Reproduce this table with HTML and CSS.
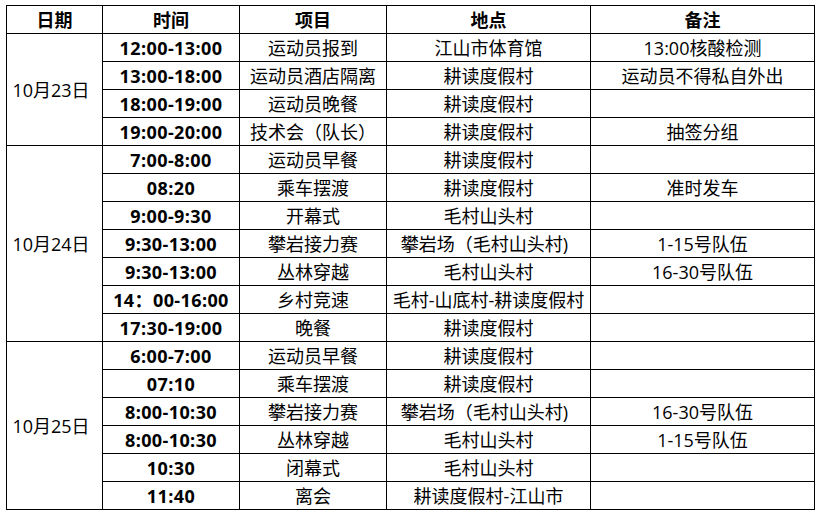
FILE: index.html
```html
<!DOCTYPE html>
<html lang="zh-CN">
<head>
<meta charset="utf-8">
<title>日程安排</title>
<link rel="stylesheet" href="styles.css">
</head>
<body>
<table class="schedule">
  <colgroup>
    <col class="c-date">
    <col class="c-time">
    <col class="c-item">
    <col class="c-place">
    <col class="c-note">
  </colgroup>
  <thead>
    <tr><th>日期</th><th>时间</th><th>项目</th><th>地点</th><th>备注</th></tr>
  </thead>
  <tbody>
    <tr><td class="date" rowspan="4">10月23日</td><td class="time">12:00-13:00</td><td>运动员报到</td><td>江山市体育馆</td><td>13:00核酸检测</td></tr>
    <tr><td class="time">13:00-18:00</td><td>运动员酒店隔离</td><td>耕读度假村</td><td>运动员不得私自外出</td></tr>
    <tr><td class="time">18:00-19:00</td><td>运动员晚餐</td><td>耕读度假村</td><td></td></tr>
    <tr><td class="time">19:00-20:00</td><td>技术会（队长）</td><td>耕读度假村</td><td>抽签分组</td></tr>

    <tr><td class="date" rowspan="7">10月24日</td><td class="time">7:00-8:00</td><td>运动员早餐</td><td>耕读度假村</td><td></td></tr>
    <tr><td class="time">08:20</td><td>乘车摆渡</td><td>耕读度假村</td><td>准时发车</td></tr>
    <tr><td class="time">9:00-9:30</td><td>开幕式</td><td>毛村山头村</td><td></td></tr>
    <tr><td class="time">9:30-13:00</td><td>攀岩接力赛</td><td class="shift">攀岩场（毛村山头村)</td><td>1-15号队伍</td></tr>
    <tr><td class="time">9:30-13:00</td><td>丛林穿越</td><td>毛村山头村</td><td>16-30号队伍</td></tr>
    <tr><td class="time">14：00-16:00</td><td>乡村竞速</td><td>毛村-山底村-耕读度假村</td><td></td></tr>
    <tr><td class="time">17:30-19:00</td><td>晚餐</td><td>耕读度假村</td><td></td></tr>

    <tr><td class="date" rowspan="6">10月25日</td><td class="time">6:00-7:00</td><td>运动员早餐</td><td>耕读度假村</td><td></td></tr>
    <tr><td class="time">07:10</td><td>乘车摆渡</td><td>耕读度假村</td><td></td></tr>
    <tr><td class="time">8:00-10:30</td><td>攀岩接力赛</td><td class="shift">攀岩场（毛村山头村)</td><td>16-30号队伍</td></tr>
    <tr><td class="time">8:00-10:30</td><td>丛林穿越</td><td>毛村山头村</td><td>1-15号队伍</td></tr>
    <tr><td class="time">10:30</td><td>闭幕式</td><td>毛村山头村</td><td></td></tr>
    <tr><td class="time">11:40</td><td>离会</td><td>耕读度假村-江山市</td><td></td></tr>
  </tbody>
</table>
</body>
</html>
```

FILE: styles.css
```css
html, body {
  margin: 0;
  padding: 0;
  background: #ffffff;
}

body {
  font-family: "Open Sans", "Noto Sans CJK SC", sans-serif;
  font-size: 18px;
  color: #000000;
}

.schedule {
  margin: 5px 0 0 6px;
  border-collapse: collapse;
  table-layout: fixed;
  width: 809px;
}

.c-date { width: 96px; }
.c-time { width: 137px; }
.c-item { width: 147px; }
.c-place { width: 204px; }
.c-note { width: 224px; }

.schedule tr {
  height: 28px;
}

.schedule th,
.schedule td {
  border: 1px solid #000000;
  padding: 0;
  height: 27px;
  line-height: 20px;
  text-align: center;
  vertical-align: middle;
  white-space: nowrap;
  overflow: hidden;
}

.schedule th {
  font-weight: 700;
}

.schedule td.time {
  font-weight: 700;
  letter-spacing: 0.4px;
}

.schedule td.date {
  font-weight: 400;
  padding-right: 7px;
}

.schedule td.shift {
  padding-right: 8px;
}
```
